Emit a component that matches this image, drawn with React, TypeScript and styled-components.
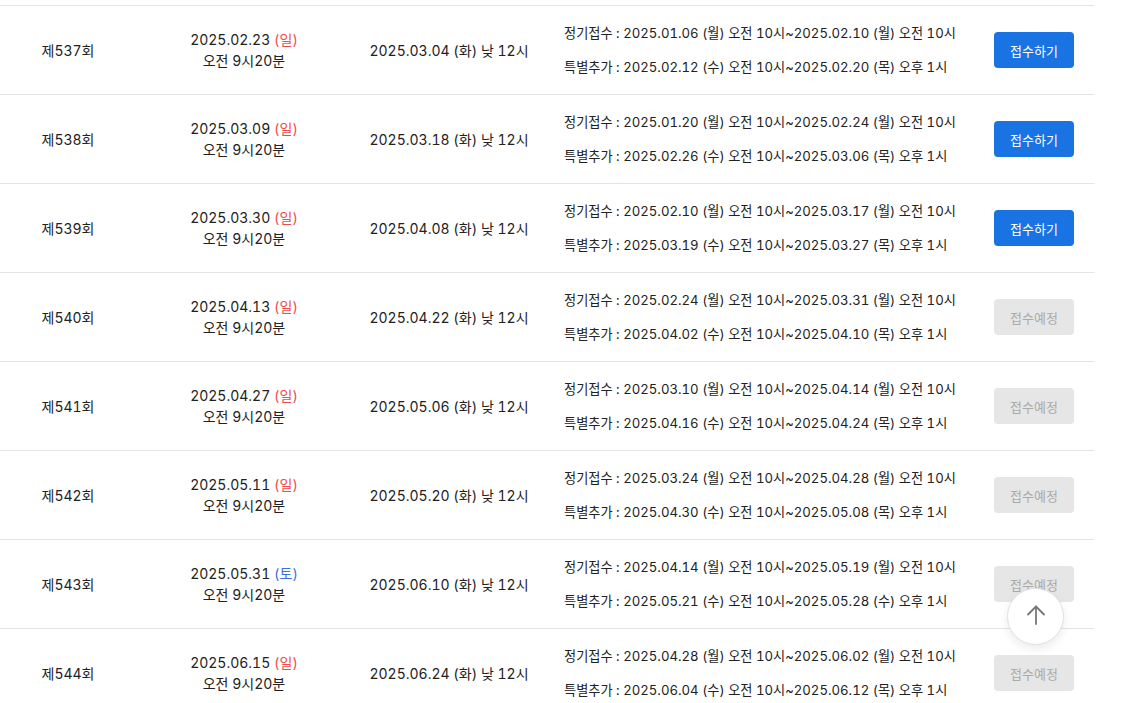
import React from 'react'
import styled, { createGlobalStyle } from 'styled-components'

const GlobalStyle = createGlobalStyle`
  html, body {
    margin: 0;
    padding: 0;
    background: #fff;
    overflow: hidden;
  }
  body {
    font-family: Inter, "Noto Sans CJK KR", sans-serif;
    font-variant-numeric: tabular-nums;
    color: #222;
  }
`

interface IRound {
  no: number
  draw: string
  day: string
  weekend: 'sun' | 'sat'
  announce: string
  regular: string
  extra: string
  open: boolean
}

const rounds: IRound[] = [
  { no: 537, draw: '2025.02.23', day: '일', weekend: 'sun', announce: '2025.03.04 (화) 낮 12시', regular: '2025.01.06 (월) 오전 10시~2025.02.10 (월) 오전 10시', extra: '2025.02.12 (수) 오전 10시~2025.02.20 (목) 오후 1시', open: true },
  { no: 538, draw: '2025.03.09', day: '일', weekend: 'sun', announce: '2025.03.18 (화) 낮 12시', regular: '2025.01.20 (월) 오전 10시~2025.02.24 (월) 오전 10시', extra: '2025.02.26 (수) 오전 10시~2025.03.06 (목) 오후 1시', open: true },
  { no: 539, draw: '2025.03.30', day: '일', weekend: 'sun', announce: '2025.04.08 (화) 낮 12시', regular: '2025.02.10 (월) 오전 10시~2025.03.17 (월) 오전 10시', extra: '2025.03.19 (수) 오전 10시~2025.03.27 (목) 오후 1시', open: true },
  { no: 540, draw: '2025.04.13', day: '일', weekend: 'sun', announce: '2025.04.22 (화) 낮 12시', regular: '2025.02.24 (월) 오전 10시~2025.03.31 (월) 오전 10시', extra: '2025.04.02 (수) 오전 10시~2025.04.10 (목) 오후 1시', open: false },
  { no: 541, draw: '2025.04.27', day: '일', weekend: 'sun', announce: '2025.05.06 (화) 낮 12시', regular: '2025.03.10 (월) 오전 10시~2025.04.14 (월) 오전 10시', extra: '2025.04.16 (수) 오전 10시~2025.04.24 (목) 오후 1시', open: false },
  { no: 542, draw: '2025.05.11', day: '일', weekend: 'sun', announce: '2025.05.20 (화) 낮 12시', regular: '2025.03.24 (월) 오전 10시~2025.04.28 (월) 오전 10시', extra: '2025.04.30 (수) 오전 10시~2025.05.08 (목) 오후 1시', open: false },
  { no: 543, draw: '2025.05.31', day: '토', weekend: 'sat', announce: '2025.06.10 (화) 낮 12시', regular: '2025.04.14 (월) 오전 10시~2025.05.19 (월) 오전 10시', extra: '2025.05.21 (수) 오전 10시~2025.05.28 (수) 오후 1시', open: false },
  { no: 544, draw: '2025.06.15', day: '일', weekend: 'sun', announce: '2025.06.24 (화) 낮 12시', regular: '2025.04.28 (월) 오전 10시~2025.06.02 (월) 오전 10시', extra: '2025.06.04 (수) 오전 10시~2025.06.12 (목) 오후 1시', open: false },
]

export default function App() {
  return (
    <>
      <GlobalStyle />
      <Page>
        <Table>
          {rounds.map((r) => (
            <Row key={r.no}>
              <RoundCell>제{r.no}회</RoundCell>
              <DrawCell>
                <span>
                  {r.draw} <Weekday kind={r.weekend}>({r.day})</Weekday>
                </span>
                <span>오전 9시20분</span>
              </DrawCell>
              <AnnounceCell>{r.announce}</AnnounceCell>
              <PeriodCell>
                <span>정기접수 : {r.regular}</span>
                <span>특별추가 : {r.extra}</span>
              </PeriodCell>
              <ActionCell>
                <ApplyButton disabled={!r.open}>{r.open ? '접수하기' : '접수예정'}</ApplyButton>
              </ActionCell>
            </Row>
          ))}
        </Table>
        <TopButton aria-label='top'>
          <svg width='20' height='20' viewBox='0 0 20 20' fill='none' stroke='#777' strokeWidth='1.8' strokeLinecap='round' strokeLinejoin='round'>
            <path d='M10 19V1.5' />
            <path d='M2 9.5L10 1.5l8 8' />
          </svg>
        </TopButton>
      </Page>
    </>
  )
}

const Page = styled.div`
  position: relative;
  width: 1136px;
  height: 703px;
  padding-top: 5px;
  box-sizing: border-box;
  overflow: hidden;
`

const Table = styled.div`
  width: 1094px;
  border-top: 1px solid #e4e4e4;
`

const Row = styled.div`
  display: grid;
  grid-template-columns: 136px 216px 194px 428px 120px;
  height: 89px;
  border-bottom: 1px solid #e4e4e4;
  box-sizing: border-box;
  align-items: center;
  font-size: 14px;
  color: #222;
`

const RoundCell = styled.div`
  text-align: center;
`

const DrawCell = styled.div`
  display: flex;
  flex-direction: column;
  align-items: center;
  line-height: 21px;
`

const Weekday = styled.span<{ kind: 'sun' | 'sat' }>`
  color: ${(p) => (p.kind === 'sun' ? '#f04b4b' : '#3c6fe0')};
`

const AnnounceCell = styled.div`
  text-align: center;
`

const PeriodCell = styled.div`
  display: flex;
  flex-direction: column;
  gap: 13px;
  padding-left: 18px;
  font-size: 13.2px;
  line-height: 21px;
  white-space: nowrap;
`

const ActionCell = styled.div`
  display: flex;
  justify-content: center;
`

const ApplyButton = styled.button`
  width: 80px;
  height: 36px;
  border: none;
  border-radius: 4px;
  font-family: inherit;
  font-size: 13px;
  color: #fff;
  background: #1a73e2;
  cursor: pointer;

  &:disabled {
    color: #aaa;
    background: #e6e6e6;
    cursor: default;
  }
`

const TopButton = styled.button`
  position: absolute;
  left: 1007px;
  top: 588px;
  width: 57px;
  height: 57px;
  border-radius: 50%;
  border: 1px solid #e2e2e2;
  background: #fff;
  box-shadow: 0 4px 10px rgba(0, 0, 0, 0.08);
  display: flex;
  align-items: center;
  justify-content: center;
  padding: 0 0 4px;
`
